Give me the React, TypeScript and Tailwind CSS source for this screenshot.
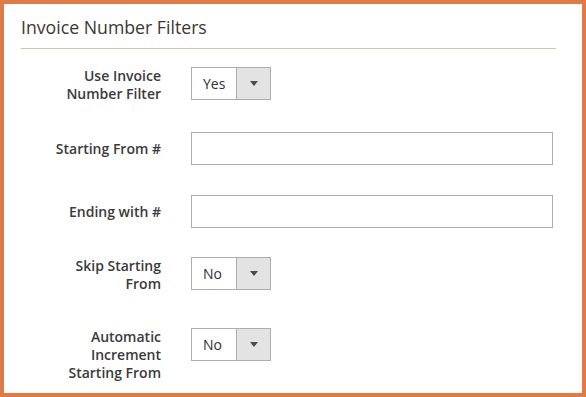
import React from "react";

const font = { fontFamily: '"Open Sans", "Liberation Sans", sans-serif' };

function Select({ value }: { value: string }) {
  return (
    <div className="flex h-[33px] w-[80px] border border-[#adadad] bg-white">
      <div className="flex flex-1 items-center pl-[11px] text-[14px] text-[#303030]">{value}</div>
      <div className="flex w-[34px] items-center justify-center border-l border-[#adadad] bg-[#e3e3e3]">
        <span className="block h-0 w-0 border-x-[4px] border-t-[5px] border-x-transparent border-t-[#514943]" />
      </div>
    </div>
  );
}

function TextInput() {
  return <input type="text" className="block h-[33px] w-[362px] border border-[#adadad] bg-white px-2 text-[14px] outline-none" />;
}

function Row({
  label,
  multi,
  className,
  children,
}: {
  label: React.ReactNode;
  multi?: boolean;
  className?: string;
  children: React.ReactNode;
}) {
  return (
    <div className={`flex items-start ${className ?? ""}`}>
      <div
        className={`w-[140px] shrink-0 text-right text-[14px] font-semibold leading-[18px] text-[#3a3a3a] ${
          multi ? "" : "flex min-h-[33px] items-center justify-end"
        }`}
      >
        <span>{label}</span>
      </div>
      <div className="ml-[30px]">{children}</div>
    </div>
  );
}

export default function App() {
  return (
    <div
      className="h-[397px] w-[586px] overflow-hidden border-4 border-[#e07a47] bg-white pl-[17px] pr-[26px] pt-[12px]"
      style={font}
    >
      <div className="border-b border-[#cfc7b6] pb-[10px] text-[17.7px] leading-[22px] text-[#41362f]">
        Invoice Number Filters
      </div>

      <Row label={<>Use Invoice<br />Number Filter</>} multi className="mt-[18px]">
        <Select value="Yes" />
      </Row>
      <Row label="Starting From #" className="mt-[29px]">
        <TextInput />
      </Row>
      <Row label="Ending with #" className="mt-[30px]">
        <TextInput />
      </Row>
      <Row label={<>Skip Starting<br />From</>} multi className="mt-[29px]">
        <Select value="No" />
      </Row>
      <Row label={<>Automatic<br />Increment<br />Starting From</>} multi className="mt-[35px]">
        <Select value="No" />
      </Row>
    </div>
  );
}
